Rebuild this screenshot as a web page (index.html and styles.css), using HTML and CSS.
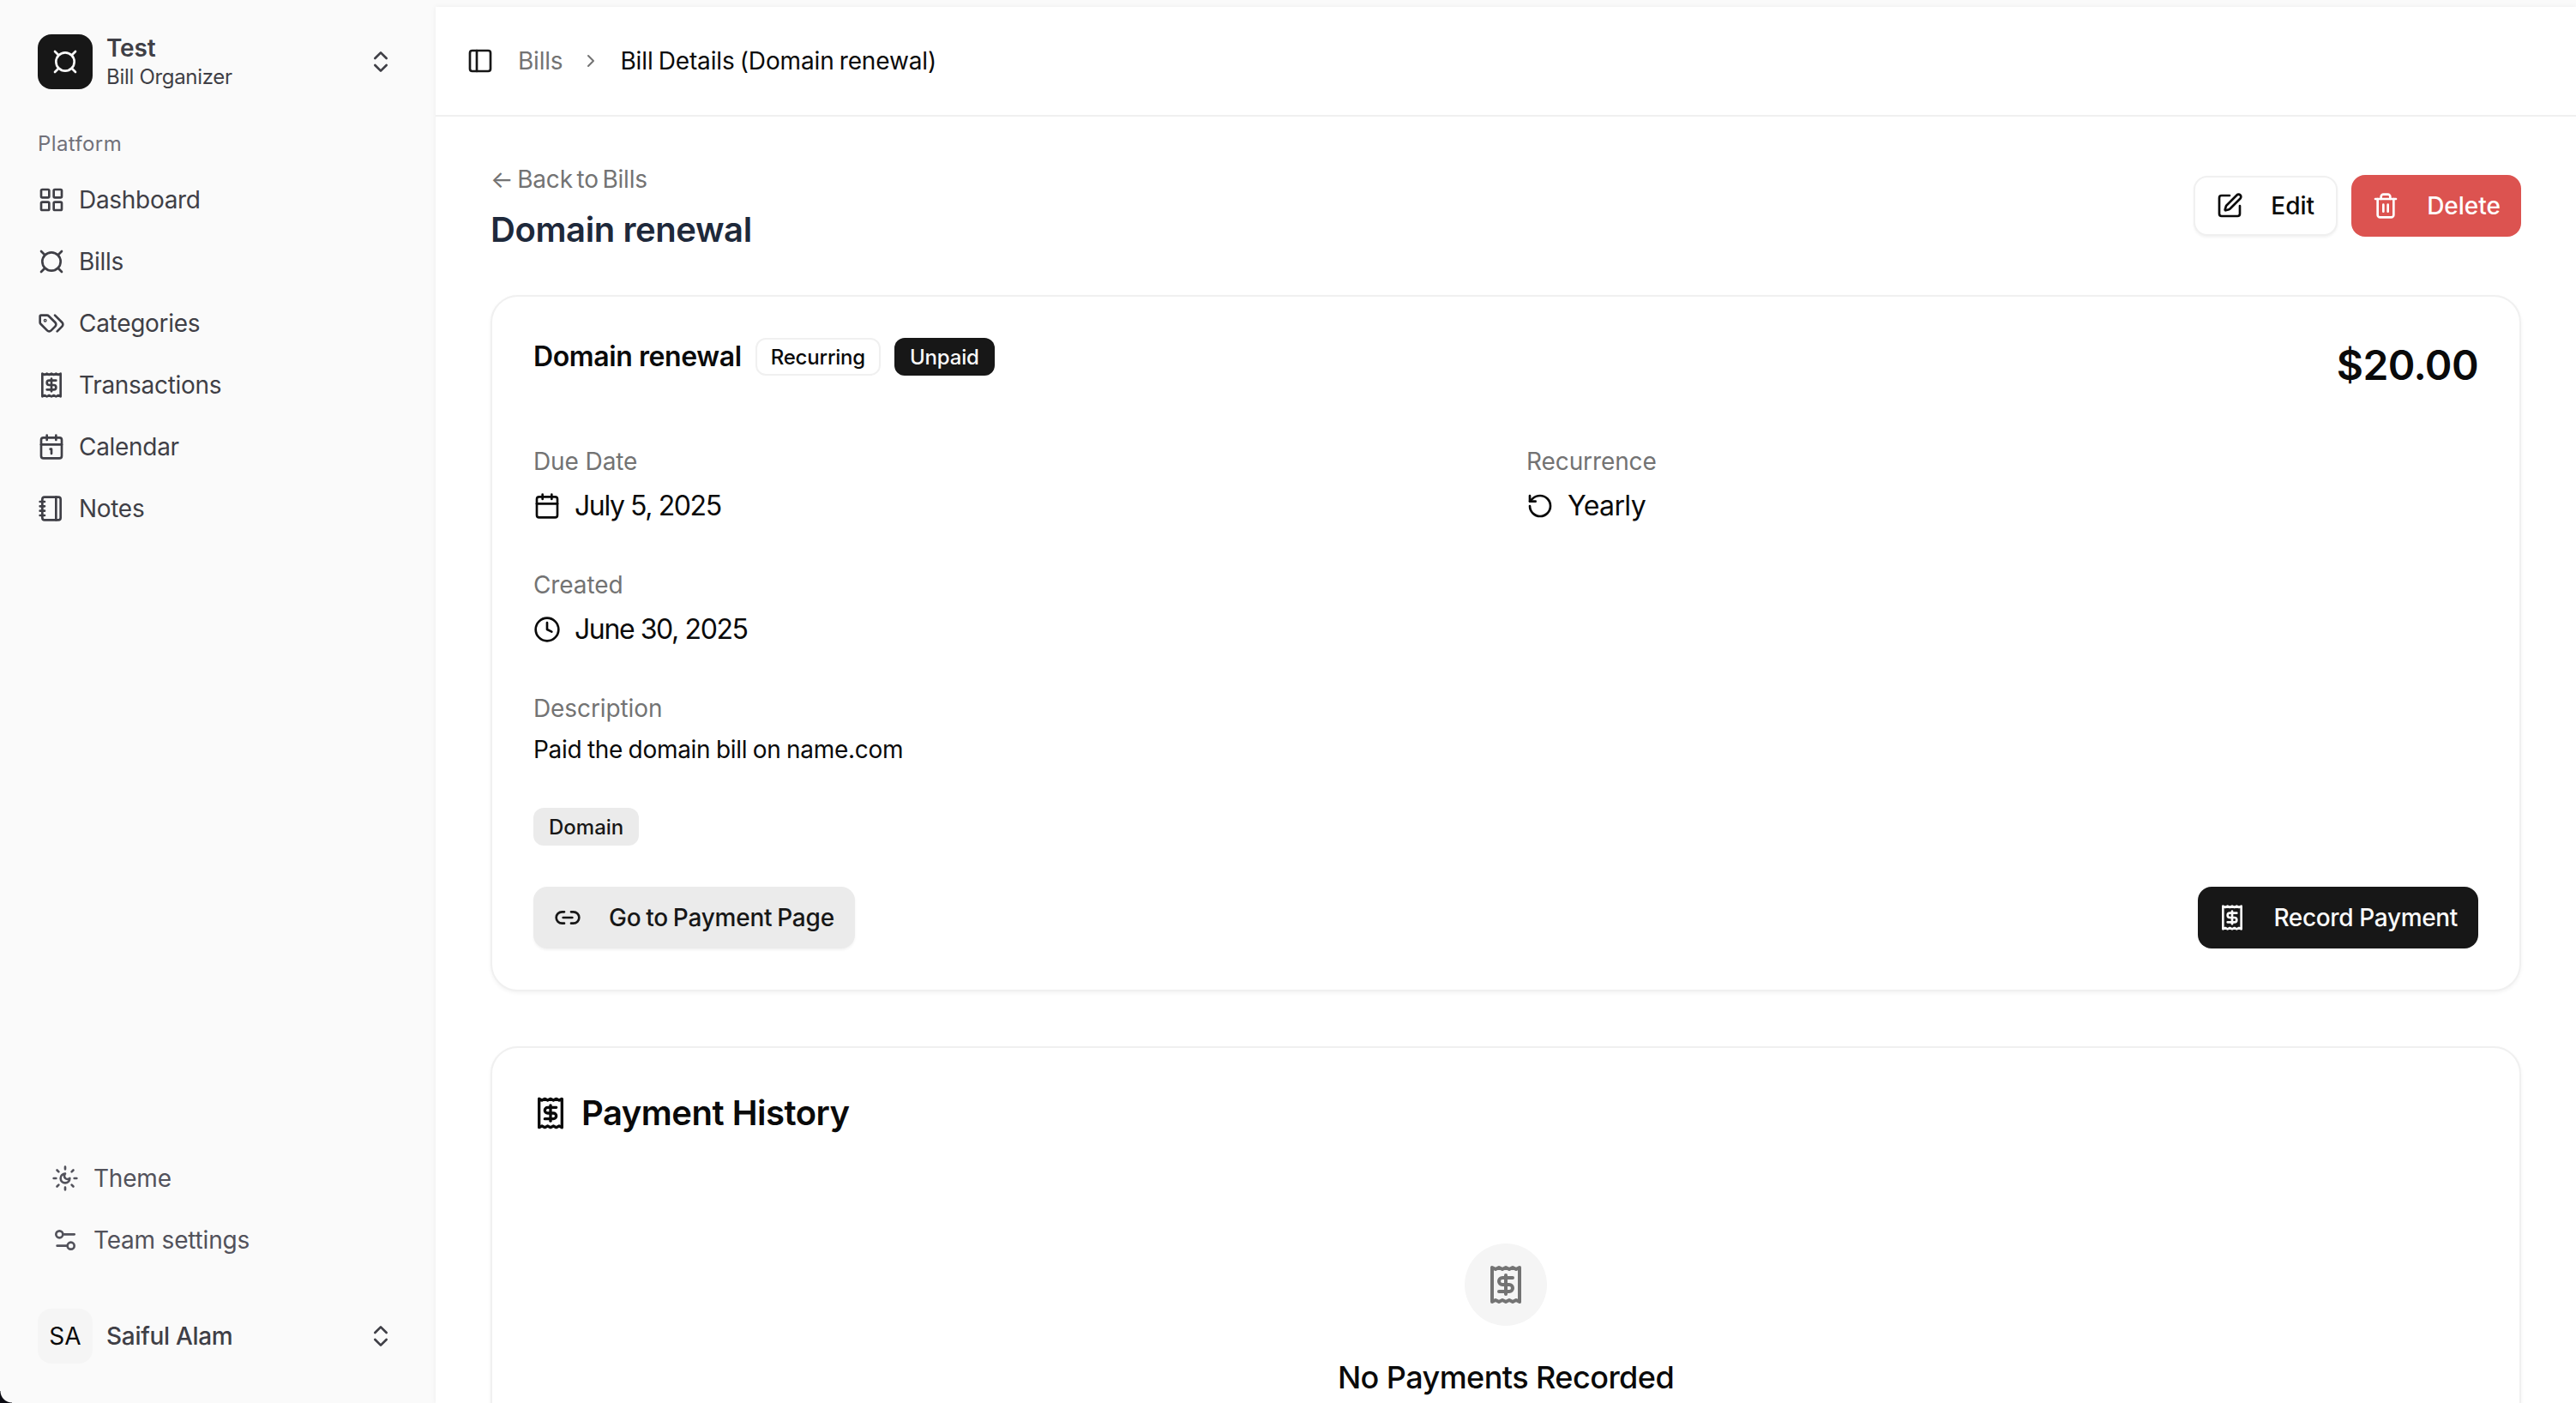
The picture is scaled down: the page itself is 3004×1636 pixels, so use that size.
FILE: index.html
```html
<!DOCTYPE html>
<html lang="en">
<head>
    <meta charset="UTF-8">
    <title>Bill Details</title>
    <link rel="stylesheet" href="styles.css">
</head>
<body>
    <svg class="icon-defs" width="0" height="0">
        <symbol id="i-currency" viewBox="0 0 24 24"><circle cx="12" cy="12" r="8"/><path d="M3 3l3 3M21 3l-3 3M3 21l3-3M21 21l-3-3"/></symbol>
        <symbol id="i-updown" viewBox="0 0 24 24"><path d="m7 15 5 5 5-5"/><path d="m7 9 5-5 5 5"/></symbol>
        <symbol id="i-grid" viewBox="0 0 24 24"><rect x="3" y="3" width="7" height="7" rx="1"/><rect x="14" y="3" width="7" height="7" rx="1"/><rect x="14" y="14" width="7" height="7" rx="1"/><rect x="3" y="14" width="7" height="7" rx="1"/></symbol>
        <symbol id="i-tags" viewBox="0 0 24 24"><path d="m15 5 6.3 6.3a2.4 2.4 0 0 1 0 3.4L17 19"/><path d="M9.586 5.586A2 2 0 0 0 8.172 5H3a1 1 0 0 0-1 1v5.172a2 2 0 0 0 .586 1.414L8.29 18.29a2.426 2.426 0 0 0 3.42 0l3.58-3.58a2.426 2.426 0 0 0 0-3.42z"/><circle cx="6.5" cy="9.5" r=".5"/></symbol>
        <symbol id="i-receipt" viewBox="0 0 24 24"><path d="M4 2v20l2-1 2 1 2-1 2 1 2-1 2 1 2-1 2 1V2l-2 1-2-1-2 1-2-1-2 1-2-1-2 1Z"/><path d="M16 8h-6a2 2 0 1 0 0 4h4a2 2 0 1 1 0 4H8"/><path d="M12 17.5v-11"/></symbol>
        <symbol id="i-calendar-1" viewBox="0 0 24 24"><path d="M11 14h1v4"/><path d="M16 2v4"/><path d="M3 10h18"/><path d="M8 2v4"/><rect x="3" y="4" width="18" height="18" rx="2"/></symbol>
        <symbol id="i-notebook" viewBox="0 0 24 24"><path d="M2 6h4M2 10h4M2 14h4M2 18h4"/><rect x="4" y="2" width="16" height="20" rx="2"/><path d="M16 2v20"/></symbol>
        <symbol id="i-sun-moon" viewBox="0 0 24 24"><path d="M12 8a2.83 2.83 0 0 0 4 4 4 4 0 1 1-4-4"/><path d="M12 2v2M12 20v2m-7.100-17.100 1.400 1.400m11.400 11.400 1.400 1.400M2 12h2m16 0h2M6.300 17.700l-1.400 1.400M19.100 4.900l-1.400 1.400"/></symbol>
        <symbol id="i-settings" viewBox="0 0 24 24"><path d="M20 7h-9"/><path d="M14 17H5"/><circle cx="17" cy="17" r="3"/><circle cx="7" cy="7" r="3"/></symbol>
        <symbol id="i-panel" viewBox="0 0 24 24"><rect x="3" y="3" width="18" height="18" rx="2"/><path d="M9 3v18"/></symbol>
        <symbol id="i-chevron" viewBox="0 0 24 24"><path d="m9 18 6-6-6-6"/></symbol>
        <symbol id="i-pen" viewBox="0 0 24 24"><path d="M12 3H5a2 2 0 0 0-2 2v14a2 2 0 0 0 2 2h14a2 2 0 0 0 2-2v-7"/><path d="M18.375 2.625a1 1 0 0 1 3 3l-9.013 9.014a2 2 0 0 1-.853.505l-2.873.84a.5.5 0 0 1-.62-.62l.84-2.873a2 2 0 0 1 .506-.852z"/></symbol>
        <symbol id="i-trash" viewBox="0 0 24 24"><path d="M3 6h18"/><path d="M19 6v14c0 1-1 2-2 2H7c-1 0-2-1-2-2V6"/><path d="M8 6V4c0-1 1-2 2-2h4c1 0 2 1 2 2v2"/><path d="M10 11v6M14 11v6"/></symbol>
        <symbol id="i-calendar" viewBox="0 0 24 24"><path d="M8 2v4"/><path d="M16 2v4"/><rect x="3" y="4" width="18" height="18" rx="2"/><path d="M3 10h18"/></symbol>
        <symbol id="i-clock" viewBox="0 0 24 24"><circle cx="12" cy="12" r="10"/><path d="M12 6v6l4 2"/></symbol>
        <symbol id="i-rotate" viewBox="0 0 24 24"><path d="M3 12a9 9 0 1 0 9-9 9.750 9.750 0 0 0-6.740 2.740L3 8"/><path d="M3 3v5h5"/></symbol>
        <symbol id="i-link" viewBox="0 0 24 24"><path d="M9 17H7A5 5 0 0 1 7 7h2"/><path d="M15 7h2a5 5 0 1 1 0 10h-2"/><path d="M8 12h8"/></symbol>
    </svg>

    <div class="app">
        <!-- Sidebar -->
        <aside class="sidebar">
            <div class="switcher">
                <div class="logo"><svg class="icon"><use href="#i-currency"/></svg></div>
                <div class="switcher-text">
                    <div class="switcher-name">Test</div>
                    <div class="switcher-sub">Bill Organizer</div>
                </div>
                <svg class="icon"><use href="#i-updown"/></svg>
            </div>

            <div class="nav-label">Platform</div>
            <nav class="nav">
                <a class="nav-item"><svg class="icon"><use href="#i-grid"/></svg>Dashboard</a>
                <a class="nav-item"><svg class="icon"><use href="#i-currency"/></svg>Bills</a>
                <a class="nav-item"><svg class="icon"><use href="#i-tags"/></svg>Categories</a>
                <a class="nav-item"><svg class="icon"><use href="#i-receipt"/></svg>Transactions</a>
                <a class="nav-item"><svg class="icon"><use href="#i-calendar-1"/></svg>Calendar</a>
                <a class="nav-item"><svg class="icon"><use href="#i-notebook"/></svg>Notes</a>
            </nav>

            <div class="sidebar-bottom">
                <a class="nav-item nav-item-sub"><svg class="icon"><use href="#i-sun-moon"/></svg>Theme</a>
                <a class="nav-item nav-item-sub"><svg class="icon"><use href="#i-settings"/></svg>Team settings</a>
                <div class="user">
                    <div class="avatar">SA</div>
                    <div class="user-name">Saiful Alam</div>
                    <svg class="icon"><use href="#i-updown"/></svg>
                </div>
            </div>
        </aside>

        <!-- Main -->
        <main class="main">
            <header class="topbar">
                <svg class="icon icon-dark"><use href="#i-panel"/></svg>
                <span class="crumb">Bills</span>
                <svg class="icon-small"><use href="#i-chevron"/></svg>
                <span class="crumb-current">Bill Details (Domain renewal)</span>
            </header>

            <div class="content">
                <div class="page-head">
                    <div>
                        <a class="back-link">← Back to Bills</a>
                        <h1>Domain renewal</h1>
                    </div>
                    <div class="page-actions">
                        <button class="btn btn-outline"><svg class="icon"><use href="#i-pen"/></svg>Edit</button>
                        <button class="btn btn-danger"><svg class="icon"><use href="#i-trash"/></svg>Delete</button>
                    </div>
                </div>

                <section class="card">
                    <div class="card-top">
                        <div class="card-title-row">
                            <h2>Domain renewal</h2>
                            <span class="badge badge-outline">Recurring</span>
                            <span class="badge badge-dark">Unpaid</span>
                        </div>
                        <div class="amount">$20.00</div>
                    </div>

                    <div class="details">
                        <div class="detail">
                            <div class="detail-label">Due Date</div>
                            <div class="detail-value detail-date"><svg class="icon"><use href="#i-calendar"/></svg>July 5, 2025</div>
                        </div>
                        <div class="detail">
                            <div class="detail-label">Recurrence</div>
                            <div class="detail-value"><svg class="icon"><use href="#i-rotate"/></svg>Yearly</div>
                        </div>
                        <div class="detail">
                            <div class="detail-label">Created</div>
                            <div class="detail-value detail-date"><svg class="icon"><use href="#i-clock"/></svg>June 30, 2025</div>
                        </div>
                    </div>

                    <div class="description">
                        <div class="detail-label">Description</div>
                        <p>Paid the domain bill on name.com</p>
                    </div>

                    <span class="badge badge-grey">Domain</span>

                    <div class="card-actions">
                        <button class="btn btn-grey"><svg class="icon"><use href="#i-link"/></svg>Go to Payment Page</button>
                        <button class="btn btn-dark"><svg class="icon"><use href="#i-receipt"/></svg>Record Payment</button>
                    </div>
                </section>

                <section class="card history">
                    <h2 class="history-title"><svg class="icon"><use href="#i-receipt"/></svg>Payment History</h2>
                    <div class="empty">
                        <div class="empty-circle"><svg class="icon-large"><use href="#i-receipt"/></svg></div>
                        <div class="empty-title">No Payments Recorded</div>
                    </div>
                </section>
            </div>
        </main>
    </div>
    <div class="window-corner"></div>
</body>
</html>
```

FILE: styles.css
```css
* {
    margin: 0;
    padding: 0;
    box-sizing: border-box;
    font-family: Inter, "Liberation Sans", sans-serif;
}

html, body {
    height: 100%;
    overflow: hidden;
}

body {
    background-color: #fafafa;
    color: #0a0a0a;
    position: relative;
}

.icon-defs {
    position: absolute;
}

.icon, .icon-small, .icon-large {
    fill: none;
    stroke: currentColor;
    stroke-width: 2;
    stroke-linecap: round;
    stroke-linejoin: round;
    flex-shrink: 0;
}

.icon {
    width: 32px;
    height: 32px;
}

.icon-small {
    width: 24px;
    height: 24px;
    margin: 0 21px;
    color: #737373;
}

.icon-large {
    width: 48px;
    height: 48px;
}

.app {
    display: flex;
    height: 1636px;
}

/* Sidebar */
.sidebar {
    width: 508px;
    flex-shrink: 0;
    padding: 40px 48px 46px 44px;
    display: flex;
    flex-direction: column;
    color: #3f3f46;
}

.switcher, .user {
    display: flex;
    align-items: center;
    height: 64px;
}

.logo, .avatar {
    width: 64px;
    height: 64px;
    border-radius: 16px;
    display: flex;
    align-items: center;
    justify-content: center;
    flex-shrink: 0;
    margin-right: 16px;
}

.logo {
    background-color: #171717;
    color: #fafafa;
}

.switcher-text, .user-name {
    flex-grow: 1;
}

.switcher-name {
    font-size: 28px;
    line-height: 34px;
    font-weight: 600;
    letter-spacing: -0.2px;
}

.switcher-sub {
    margin-top: 2px;
    font-size: 24px;
    line-height: 30px;
    letter-spacing: -0.3px;
}

.nav-label {
    margin-top: 44px;
    font-size: 24px;
    line-height: 40px;
    letter-spacing: 0.4px;
    color: #71717a;
}

.nav {
    margin-top: 9px;
    display: flex;
    flex-direction: column;
}

.nav-item {
    display: flex;
    align-items: center;
    gap: 16px;
    height: 72px;
    font-size: 28px;
    letter-spacing: -0.3px;
}

.sidebar-bottom {
    margin-top: auto;
}

.nav-item-sub {
    gap: 17px;
    padding-left: 16px;
    color: #52525b;
    letter-spacing: -0.2px;
}

.user {
    margin-top: 44px;
}

.avatar {
    background-color: #f5f5f5;
    color: #0a0a0a;
    font-size: 28px;
}

.user-name {
    font-size: 28px;
    font-weight: 500;
    letter-spacing: -0.3px;
}

/* Main */
.main {
    flex-grow: 1;
    margin-top: 8px;
    background-color: #fff;
    box-shadow: 0 0 6px rgba(0,0,0,0.06);
    overflow: hidden;
}

.topbar {
    height: 128px;
    padding-left: 36px;
    display: flex;
    align-items: center;
    border-bottom: 2px solid #f0f0f0;
    font-size: 28px;
}

.topbar .icon-dark {
    color: #171717;
}

.crumb {
    margin-left: 28px;
    color: #737373;
    letter-spacing: -0.2px;
}

.crumb-current {
    margin-left: 1px;
    color: #0a0a0a;
    letter-spacing: -0.15px;
    word-spacing: -1.5px;
}

.content {
    padding: 53px 64px 0;
}

.page-head {
    display: flex;
    justify-content: space-between;
    align-items: center;
    margin-bottom: 48px;
}

.back-link {
    display: block;
    font-size: 28px;
    line-height: 40px;
    color: #737373;
    letter-spacing: -0.2px;
    word-spacing: -3px;
}

h1 {
    margin-top: 11px;
    font-size: 40px;
    line-height: 56px;
    font-weight: 600;
    letter-spacing: -0.4px;
    color: #1e293b;
}

.page-actions {
    display: flex;
    align-items: center;
    gap: 16px;
    margin-bottom: 6px;
}

.btn {
    display: flex;
    align-items: center;
    gap: 32px;
    height: 72px;
    padding: 0 24px;
    border: none;
    border-radius: 16px;
    font-size: 28px;
    font-weight: 500;
    cursor: pointer;
}

.btn-outline {
    height: 70px;
    padding: 0 25px 0 24px;
    background-color: #fff;
    border: 2px solid #f0f0f0;
    color: #0a0a0a;
    box-shadow: 0 2px 3px rgba(0,0,0,0.05);
}

.btn-danger {
    background-color: #dc5350;
    color: #fff;
}

.btn-grey {
    background-color: #ebebeb;
    color: #171717;
    letter-spacing: -0.2px;
    word-spacing: -1.5px;
    box-shadow: 0 2px 3px rgba(0,0,0,0.05);
}

.btn-dark {
    background-color: #171717;
    color: #fafafa;
    letter-spacing: -0.35px;
}

.card {
    background-color: #fff;
    border: 2px solid #f0f0f0;
    border-radius: 32px;
    padding: 48px;
    box-shadow: 0 2px 4px rgba(0,0,0,0.05);
}

.card-top {
    display: flex;
    justify-content: space-between;
    align-items: flex-start;
}

.card-title-row {
    display: flex;
    align-items: center;
    gap: 16px;
}

h2 {
    font-size: 32px;
    font-weight: 600;
    line-height: 44px;
    letter-spacing: -0.4px;
}

.badge {
    display: inline-flex;
    align-items: center;
    height: 44px;
    padding: 0 18px;
    border-radius: 12px;
    font-size: 24px;
    font-weight: 500;
    letter-spacing: -0.2px;
}

.badge-outline {
    padding: 0 16px;
    border: 2px solid #f0f0f0;
}

.badge-dark {
    background-color: #171717;
    color: #fafafa;
}

.badge-grey {
    background-color: #ebebeb;
    color: #171717;
    letter-spacing: 0;
}

.amount {
    font-size: 48px;
    line-height: 64px;
    font-weight: 600;
    letter-spacing: -0.6px;
}

.details {
    margin-top: 60px;
    display: grid;
    grid-template-columns: 1fr 1fr;
    column-gap: 48px;
    row-gap: 48px;
}

.detail-label {
    font-size: 28px;
    line-height: 40px;
    letter-spacing: -0.1px;
    color: #737373;
}

.detail-value {
    margin-top: 8px;
    display: flex;
    align-items: center;
    gap: 16px;
    font-size: 32px;
    line-height: 48px;
    letter-spacing: -0.6px;
}

.detail-date {
    letter-spacing: -1.4px;
}

.description {
    margin-top: 48px;
    margin-bottom: 48px;
}

.description p {
    margin-top: 8px;
    font-size: 28px;
    line-height: 40px;
    letter-spacing: -0.3px;
    word-spacing: -1px;
}

.card-actions {
    margin-top: 48px;
    display: flex;
    justify-content: space-between;
}

.history {
    margin-top: 64px;
}

.history-title {
    display: flex;
    align-items: center;
    gap: 16px;
    font-size: 40px;
    line-height: 56px;
    letter-spacing: -0.5px;
}

.history-title .icon {
    width: 40px;
    height: 40px;
}

.empty {
    margin-top: 124px;
    display: flex;
    flex-direction: column;
    align-items: center;
}

.empty-circle {
    width: 96px;
    height: 96px;
    border-radius: 50%;
    background-color: #f5f5f5;
    color: #737373;
    display: flex;
    align-items: center;
    justify-content: center;
}

.empty-title {
    margin-top: 34px;
    font-size: 36px;
    line-height: 52px;
    font-weight: 500;
    letter-spacing: -0.55px;
}

.window-corner {
    position: absolute;
    left: 0;
    bottom: 0;
    width: 14px;
    height: 14px;
    background: radial-gradient(circle at 100% 0, transparent 13px, #0b0b12 14px);
}
```
